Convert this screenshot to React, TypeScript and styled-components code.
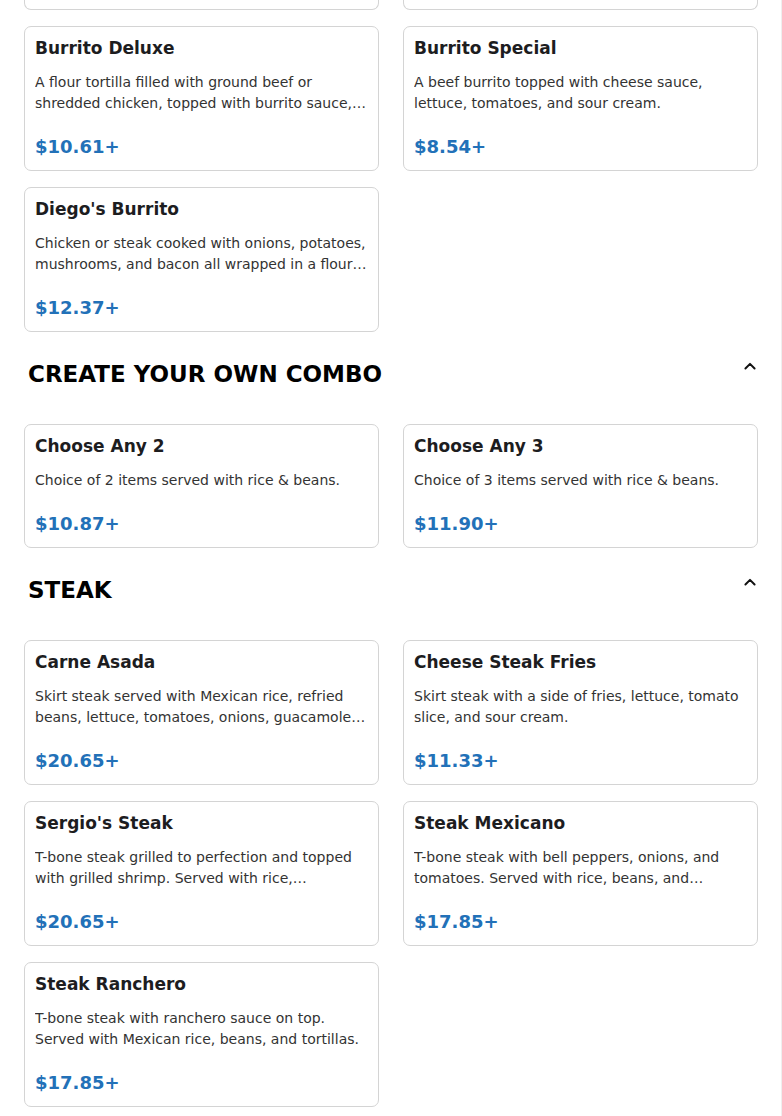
import React from "react";
import styled, { createGlobalStyle } from "styled-components";

const GlobalStyle = createGlobalStyle`
  html, body { margin: 0; padding: 0; background: #ffffff; }
  body { font-family: "DejaVu Sans", "Liberation Sans", sans-serif; }
  * { box-sizing: border-box; }
`;

const Page = styled.div`
  width: 782px;
  min-height: 1116px;
  padding: 0 23px 10px 24px;
  border-right: 1px solid #efefef;
  background: #fff;
`;

const Grid = styled.div`
  display: grid;
  grid-template-columns: 1fr 1fr;
  column-gap: 24px;
  row-gap: 16px;
`;

const PeekGrid = styled(Grid)`
  margin-bottom: 16px;
`;

const StubCard = styled.div`
  height: 10px;
  border: 1px solid #d4d4d4;
  border-top: none;
  border-radius: 0 0 7px 7px;
`;

const Card = styled.div`
  border: 1px solid #d4d4d4;
  border-radius: 7px;
  padding: 10px 10px 11px 10px;
  display: flex;
  flex-direction: column;
  background: #fff;
`;

const Title = styled.h3`
  margin: 0;
  font-size: 17px;
  line-height: 22px;
  font-weight: 700;
  color: #1d1d1f;
`;

const Desc = styled.p`
  margin: 13px 0 0 0;
  font-size: 14px;
  line-height: 21px;
  color: #333333;
  display: -webkit-box;
  -webkit-line-clamp: 2;
  -webkit-box-orient: vertical;
  overflow: hidden;
`;

const Price = styled.div`
  margin-top: 21px;
  font-size: 18px;
  line-height: 24px;
  font-weight: 700;
  color: #2271b8;
`;

const SectionHeader = styled.div`
  display: flex;
  justify-content: space-between;
  align-items: flex-start;
  padding: 24px 0 36px 0;

  & + div {
    margin-top: 0;
  }
`;

const SectionTitle = styled.h2`
  margin: 4px 0 0 4px;
  font-size: 23px;
  line-height: 28px;
  font-weight: 700;
  color: #000;
`;

const Toggle = styled.button`
  width: 20px;
  height: 20px;
  padding: 0;
  margin: 0 -2px 0 0;
  border: none;
  background: transparent;
  display: flex;
  align-items: center;
  justify-content: center;
  color: #111;
  cursor: pointer;
`;

type Item = { name: string; desc: string; price: string };

const burritos: Item[] = [
  {
    name: "Burrito Deluxe",
    desc: "A flour tortilla filled with ground beef or shredded chicken, topped with burrito sauce, cheese, lettuce, tomatoes, and sour cream.",
    price: "$10.61+",
  },
  {
    name: "Burrito Special",
    desc: "A beef burrito topped with cheese sauce, lettuce, tomatoes, and sour cream.",
    price: "$8.54+",
  },
  {
    name: "Diego's Burrito",
    desc: "Chicken or steak cooked with onions, potatoes, mushrooms, and bacon all wrapped in a flour tortilla.",
    price: "$12.37+",
  },
];

const combos: Item[] = [
  { name: "Choose Any 2", desc: "Choice of 2 items served with rice & beans.", price: "$10.87+" },
  { name: "Choose Any 3", desc: "Choice of 3 items served with rice & beans.", price: "$11.90+" },
];

const steaks: Item[] = [
  {
    name: "Carne Asada",
    desc: "Skirt steak served with Mexican rice, refried beans, lettuce, tomatoes, onions, guacamole, and tortillas.",
    price: "$20.65+",
  },
  {
    name: "Cheese Steak Fries",
    desc: "Skirt steak with a side of fries, lettuce, tomato slice, and sour cream.",
    price: "$11.33+",
  },
  {
    name: "Sergio's Steak",
    desc: "T-bone steak grilled to perfection and topped with grilled shrimp. Served with rice, guacamole, and tortillas.",
    price: "$20.65+",
  },
  {
    name: "Steak Mexicano",
    desc: "T-bone steak with bell peppers, onions, and tomatoes. Served with rice, beans, and tortillas.",
    price: "$17.85+",
  },
  {
    name: "Steak Ranchero",
    desc: "T-bone steak with ranchero sauce on top. Served with Mexican rice, beans, and tortillas.",
    price: "$17.85+",
  },
];

const ChevronUp = () => (
  <svg width="20" height="20" viewBox="0 0 24 24" fill="none" stroke="currentColor" strokeWidth="2.4" strokeLinecap="round" strokeLinejoin="round">
    <path d="m17.5 15-5.5-5.5-5.5 5.5" />
  </svg>
);

const MenuCard = ({ item }: { item: Item }) => (
  <Card>
    <Title>{item.name}</Title>
    <Desc>{item.desc}</Desc>
    <Price>{item.price}</Price>
  </Card>
);

const Section = ({ title, items }: { title: string; items: Item[] }) => (
  <section>
    <SectionHeader>
      <SectionTitle>{title}</SectionTitle>
      <Toggle aria-label="Collapse">
        <ChevronUp />
      </Toggle>
    </SectionHeader>
    <Grid>
      {items.map((it) => (
        <MenuCard key={it.name} item={it} />
      ))}
    </Grid>
  </section>
);

export default function App() {
  return (
    <>
      <GlobalStyle />
      <Page>
        <PeekGrid>
          <StubCard />
          <StubCard />
        </PeekGrid>
        <Grid>
          {burritos.map((it) => (
            <MenuCard key={it.name} item={it} />
          ))}
        </Grid>
        <Section title="CREATE YOUR OWN COMBO" items={combos} />
        <Section title="STEAK" items={steaks} />
      </Page>
    </>
  );
}
